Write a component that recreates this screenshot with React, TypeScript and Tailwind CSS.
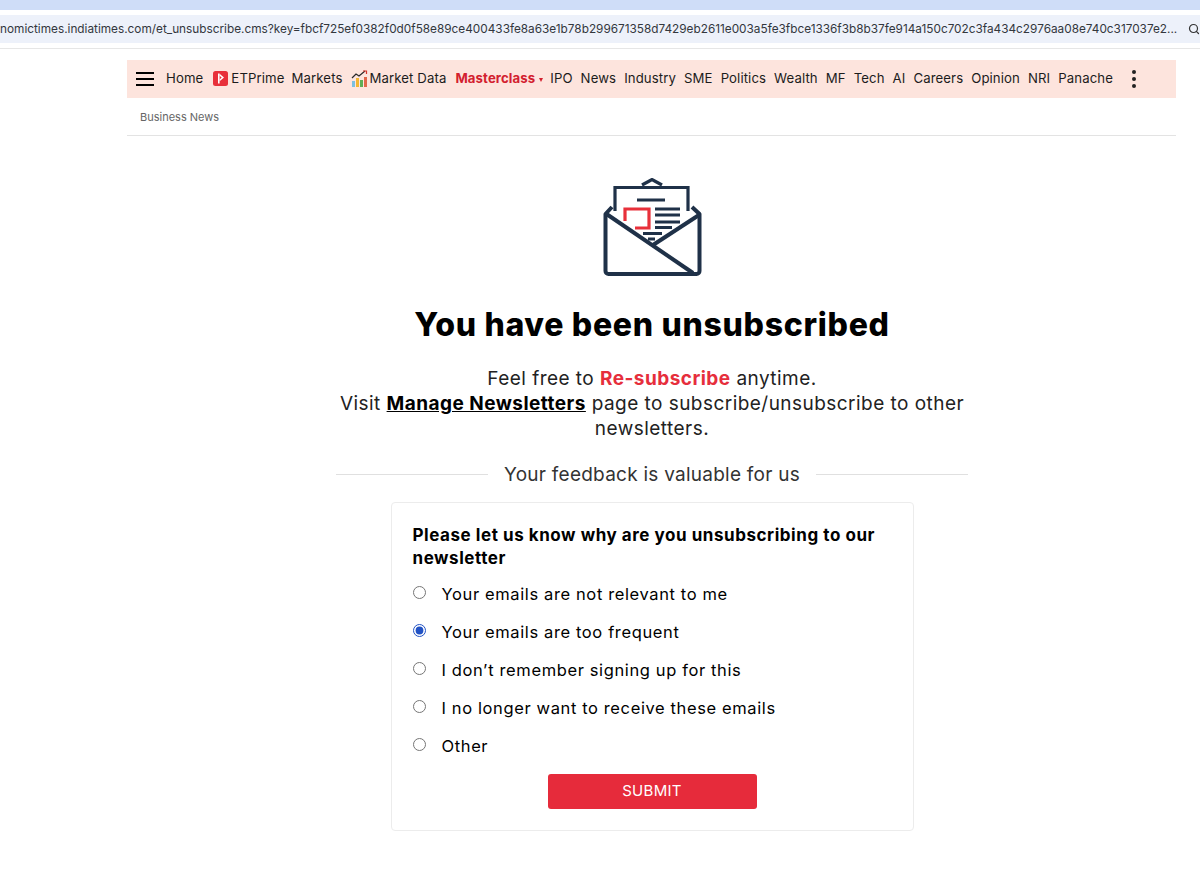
import React from 'react';
import { Search } from 'lucide-react';

const URL_TEXT =
  'nomictimes.indiatimes.com/et_unsubscribe.cms?key=fbcf725ef0382f0d0f58e89ce400433fe8a63e1b78b299671358d7429eb2611e003a5fe3fbce1336f3b8b37fe914a150c702c3fa434c2976aa08e740c317037e2...';

const NAV_ITEMS = ['IPO', 'News', 'Industry', 'SME', 'Politics', 'Wealth', 'MF', 'Tech', 'AI', 'Careers', 'Opinion', 'NRI', 'Panache'];

const REASONS = [
  'Your emails are not relevant to me',
  'Your emails are too frequent',
  'I don’t remember signing up for this',
  'I no longer want to receive these emails',
  'Other',
];

function PrimeIcon() {
  return (
    <svg width="15" height="15" viewBox="0 0 15 15" className="shrink-0">
      <rect width="15" height="15" rx="2.5" fill="#e8303a" />
      <path d="M5 2.5h1.6v10H5z" fill="#fff" />
      <path d="M6.6 2.8 11 6.6 6.6 10.2V8.4L8.7 6.6 6.6 4.8z" fill="#fff" />
    </svg>
  );
}

function ChartIcon() {
  return (
    <svg width="17" height="18" viewBox="0 0 17 18" className="shrink-0">
      <rect x="1" y="11" width="3" height="6" fill="#7cc0e0" />
      <rect x="5" y="8" width="3" height="9" fill="#f2b632" />
      <rect x="9" y="10" width="3" height="7" fill="#5fae57" />
      <rect x="13" y="7" width="3" height="10" fill="#e2674a" />
      <path d="M1 8 5 4l3 2 6-5" fill="none" stroke="#2a2a2a" strokeWidth="1.2" />
      <path d="M12 1h3.5v3" fill="none" stroke="#d8342c" strokeWidth="1.2" />
    </svg>
  );
}

function EnvelopeIcon() {
  return (
    <svg width="100" height="100" viewBox="0 0 100 100" fill="none" className="block">
      <g stroke="#1f3148" strokeWidth="3.2">
        <path d="M40 7 50 1.5 60 7" />
        <path d="M13 33V9.5h73V33" />
        <path d="M35 22h28M53 31h25M53 37h25M53 44h25M53 49.5h17M41 55.5h19M46 61h7" strokeWidth="2.8" />
      </g>
      <path d="M23 43V31h24v19H33" stroke="#e8303a" strokeWidth="3.2" />
      <g stroke="#1f3148" strokeWidth="4" strokeLinejoin="round">
        <path d="M10 29 3.5 36v57a3 3 0 0 0 3 3h88a3 3 0 0 0 3-3V36L90 29" />
        <path d="M4.5 36 91 95" />
        <path d="M97 37 51 67" />
      </g>
    </svg>
  );
}

export default function App() {
  return (
    <div className="h-[875px] overflow-hidden bg-white font-['Inter','Noto_Sans',sans-serif] text-black">
      {/* browser chrome */}
      <div className="h-[10px] bg-[#cfddf8]" />
      <div className="mt-[5px] flex h-[28px] items-center justify-between bg-[#edf1fa]">
        <span className="text-[11.8px] leading-[16px] whitespace-nowrap text-[#33373d]">{URL_TEXT}</span>
        <Search size={12} strokeWidth={2.4} className="shrink-0 text-[#333]" />
      </div>
      <div className="mt-[5px] h-px bg-[#e6e6e6]" />

      {/* site header */}
      <div className="mt-[11px] ml-[127px] w-[1049px]">
        <nav className="flex h-[38px] items-center bg-[#fde4dd] pl-[9px] text-[13.2px] tracking-[0.1px] whitespace-nowrap text-[#1c1c1c]">
          <div className="flex w-[18px] flex-col gap-[3.5px]">
            <span className="h-[2.5px] bg-black" />
            <span className="h-[2.5px] bg-black" />
            <span className="h-[2.5px] bg-black" />
          </div>
          <span className="ml-[12px]">Home</span>
          <span className="ml-[10px] flex items-center gap-[3px]">
            <PrimeIcon />
            ETPrime
          </span>
          <span className="ml-[7px]">Markets</span>
          <span className="ml-[8px] flex items-center gap-[2px]">
            <ChartIcon />
            Market Data
          </span>
          <span className="ml-[9px] flex items-center font-bold text-[#d3202f]">
            Masterclass
            <span className="mt-[2px] ml-[4px] h-0 w-0 border-x-[2.5px] border-t-[4px] border-x-transparent border-t-[#d3202f]" />
          </span>
          <div className="ml-[7px] flex gap-[8px]">
            {NAV_ITEMS.map((item) => (
              <span key={item}>{item}</span>
            ))}
          </div>
          <div className="ml-[19px] flex flex-col gap-[3px]">
            <span className="size-[4px] rounded-full bg-[#222]" />
            <span className="size-[4px] rounded-full bg-[#222]" />
            <span className="size-[4px] rounded-full bg-[#222]" />
          </div>
        </nav>
        <div className="flex h-[38px] items-center border-b border-[#e3e3e3] pt-[1px] pl-[13px] text-[11px] text-[#666]">
          Business News
        </div>
      </div>

      {/* content */}
      <main className="mt-[42px] ml-[336px] flex w-[632px] flex-col items-center">
        <EnvelopeIcon />
        <h1 className="mt-[27px] text-[32px] leading-[40px] font-extrabold tracking-[0.7px]">You have been unsubscribed</h1>
        <div className="mt-[21px] w-[632px] text-center text-[19px] leading-[25px] tracking-[0.46px] text-[#222]">
          <p>
            Feel free to <span className="font-bold text-[#e62e3c]">Re-subscribe</span> anytime.
          </p>
          <p>
            Visit <span className="font-bold text-black underline">Manage Newsletters</span> page to subscribe/unsubscribe to other newsletters.
          </p>
        </div>
        <div className="mt-[21px] flex w-[632px] items-center gap-[16px] text-[19px] leading-[25px] tracking-[0.25px] text-[#333]">
          <span className="h-px flex-1 bg-[#e0e0e0]" />
          Your feedback is valuable for us
          <span className="h-px flex-1 bg-[#e0e0e0]" />
        </div>
        <form className="mt-[15px] h-[329px] w-[523px] rounded-[4px] border border-[#ececec] px-[21px] pt-[21px]">
          <p className="text-[17px] leading-[23px] font-bold tracking-[0.55px]">
            Please let us know why are you unsubscribing to our newsletter
          </p>
          <div className="mt-[13px] flex flex-col gap-[16px]">
            {REASONS.map((reason, i) => (
              <label key={reason} className="flex h-[22px] items-center gap-[16px] text-[16.5px] tracking-[0.62px]">
                <input type="radio" name="reason" defaultChecked={i === 1} className="m-0 mb-[3px] size-[13px] accent-[#2152c4]" />
                {reason}
              </label>
            ))}
          </div>
          <button type="button" className="mx-auto mt-[17px] block h-[35px] w-[209px] rounded-[3px] bg-[#e62b3b] text-[15px] tracking-[0.3px] text-white">
            SUBMIT
          </button>
        </form>
      </main>
    </div>
  );
}
